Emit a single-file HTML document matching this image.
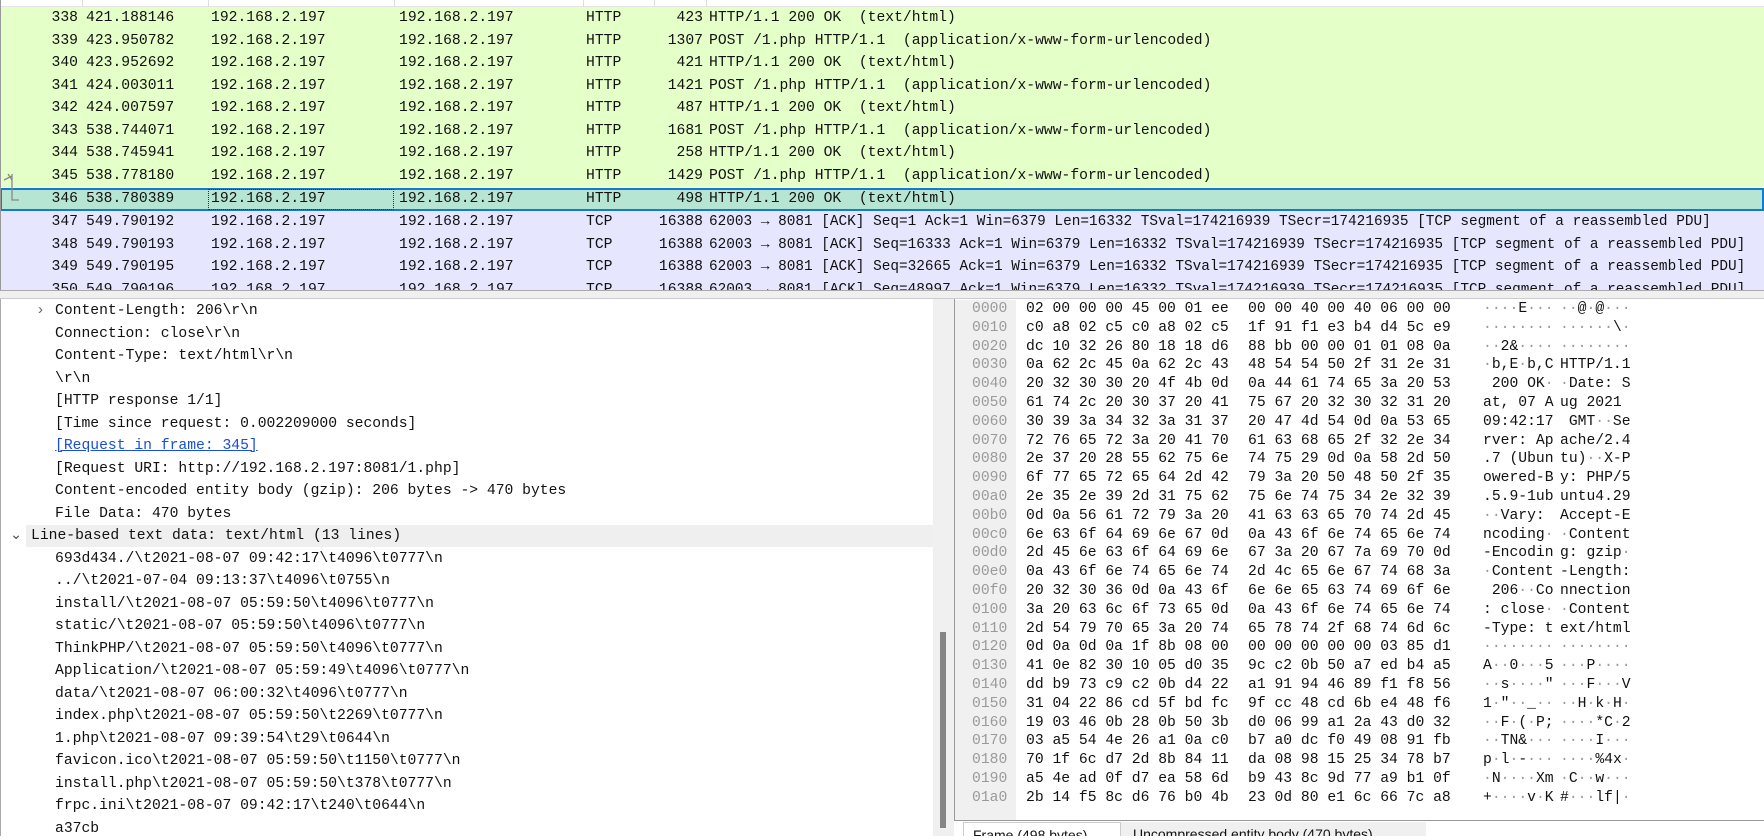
<!DOCTYPE html>
<html><head><meta charset="utf-8"><style>
*{margin:0;padding:0;box-sizing:border-box}
body{width:1764px;height:836px;overflow:hidden;background:#fff;font-family:"Liberation Mono",monospace;font-size:14.7px;color:#111;position:relative}
.a{position:absolute;white-space:pre}
.row{position:absolute;left:0;width:1764px;height:22.5px;line-height:22.5px}
.h{background:#e4ffc7}.t{background:#e7e6ff}
.r{text-align:right}
.t .i{font-size:14.4px}
.hx{position:absolute;white-space:pre;line-height:18.8px}
.off{color:#9a9a9a}
.dl{position:absolute;white-space:pre;line-height:22.5px}
</style></head><body>
<div class="a" style="left:0;top:0;width:1764px;height:7px;background:#fff;border-bottom:1px solid #e5e5e5"></div>
<div class="a" style="left:82px;top:0;width:1px;height:7px;background:#ddd"></div>
<div class="a" style="left:208px;top:0;width:1px;height:7px;background:#ddd"></div>
<div class="a" style="left:394px;top:0;width:1px;height:7px;background:#ddd"></div>
<div class="a" style="left:583px;top:0;width:1px;height:7px;background:#ddd"></div>
<div class="a" style="left:654px;top:0;width:1px;height:7px;background:#ddd"></div>
<div class="a" style="left:706px;top:0;width:1px;height:7px;background:#ddd"></div>

<div class="row h" style="top:7px"><span class="a r" style="left:40px;width:38px">338</span><span class="a" style="left:86px">421.188146</span><span class="a" style="left:211px">192.168.2.197</span><span class="a" style="left:399px">192.168.2.197</span><span class="a" style="left:586px">HTTP</span><span class="a r" style="left:640px;width:63px">423</span><span class="a" style="left:709px">HTTP/1.1 200 OK  (text/html)</span></div>
<div class="row h" style="top:29.5px"><span class="a r" style="left:40px;width:38px">339</span><span class="a" style="left:86px">423.950782</span><span class="a" style="left:211px">192.168.2.197</span><span class="a" style="left:399px">192.168.2.197</span><span class="a" style="left:586px">HTTP</span><span class="a r" style="left:640px;width:63px">1307</span><span class="a" style="left:709px">POST /1.php HTTP/1.1  (application/x-www-form-urlencoded)</span></div>
<div class="row h" style="top:52px"><span class="a r" style="left:40px;width:38px">340</span><span class="a" style="left:86px">423.952692</span><span class="a" style="left:211px">192.168.2.197</span><span class="a" style="left:399px">192.168.2.197</span><span class="a" style="left:586px">HTTP</span><span class="a r" style="left:640px;width:63px">421</span><span class="a" style="left:709px">HTTP/1.1 200 OK  (text/html)</span></div>
<div class="row h" style="top:74.5px"><span class="a r" style="left:40px;width:38px">341</span><span class="a" style="left:86px">424.003011</span><span class="a" style="left:211px">192.168.2.197</span><span class="a" style="left:399px">192.168.2.197</span><span class="a" style="left:586px">HTTP</span><span class="a r" style="left:640px;width:63px">1421</span><span class="a" style="left:709px">POST /1.php HTTP/1.1  (application/x-www-form-urlencoded)</span></div>
<div class="row h" style="top:97px"><span class="a r" style="left:40px;width:38px">342</span><span class="a" style="left:86px">424.007597</span><span class="a" style="left:211px">192.168.2.197</span><span class="a" style="left:399px">192.168.2.197</span><span class="a" style="left:586px">HTTP</span><span class="a r" style="left:640px;width:63px">487</span><span class="a" style="left:709px">HTTP/1.1 200 OK  (text/html)</span></div>
<div class="row h" style="top:119.5px"><span class="a r" style="left:40px;width:38px">343</span><span class="a" style="left:86px">538.744071</span><span class="a" style="left:211px">192.168.2.197</span><span class="a" style="left:399px">192.168.2.197</span><span class="a" style="left:586px">HTTP</span><span class="a r" style="left:640px;width:63px">1681</span><span class="a" style="left:709px">POST /1.php HTTP/1.1  (application/x-www-form-urlencoded)</span></div>
<div class="row h" style="top:142px"><span class="a r" style="left:40px;width:38px">344</span><span class="a" style="left:86px">538.745941</span><span class="a" style="left:211px">192.168.2.197</span><span class="a" style="left:399px">192.168.2.197</span><span class="a" style="left:586px">HTTP</span><span class="a r" style="left:640px;width:63px">258</span><span class="a" style="left:709px">HTTP/1.1 200 OK  (text/html)</span></div>
<div class="row h" style="top:164.5px"><span class="a r" style="left:40px;width:38px">345</span><span class="a" style="left:86px">538.778180</span><span class="a" style="left:211px">192.168.2.197</span><span class="a" style="left:399px">192.168.2.197</span><span class="a" style="left:586px">HTTP</span><span class="a r" style="left:640px;width:63px">1429</span><span class="a" style="left:709px">POST /1.php HTTP/1.1  (application/x-www-form-urlencoded)</span></div>
<div class="row" style="top:188px;height:23px;background:#b6e6d3;border:2px solid #1479d0;line-height:19px"><span class="a r" style="left:38px;width:38px">346</span><span class="a" style="left:84px">538.780389</span><span class="a" style="left:206px;top:-1px;width:186px;height:21px;border:1px dotted #333"></span><span class="a" style="left:209px">192.168.2.197</span><span class="a" style="left:397px">192.168.2.197</span><span class="a" style="left:584px">HTTP</span><span class="a r" style="left:638px;width:63px">498</span><span class="a" style="left:707px">HTTP/1.1 200 OK  (text/html)</span></div>
<div class="row t" style="top:211px"><span class="a r" style="left:40px;width:38px">347</span><span class="a" style="left:86px">549.790192</span><span class="a" style="left:211px">192.168.2.197</span><span class="a" style="left:399px">192.168.2.197</span><span class="a" style="left:586px">TCP</span><span class="a r" style="left:640px;width:63px">16388</span><span class="a i" style="left:709px">62003 → 8081 [ACK] Seq=1 Ack=1 Win=6379 Len=16332 TSval=174216939 TSecr=174216935 [TCP segment of a reassembled PDU]</span></div>
<div class="row t" style="top:233.5px"><span class="a r" style="left:40px;width:38px">348</span><span class="a" style="left:86px">549.790193</span><span class="a" style="left:211px">192.168.2.197</span><span class="a" style="left:399px">192.168.2.197</span><span class="a" style="left:586px">TCP</span><span class="a r" style="left:640px;width:63px">16388</span><span class="a i" style="left:709px">62003 → 8081 [ACK] Seq=16333 Ack=1 Win=6379 Len=16332 TSval=174216939 TSecr=174216935 [TCP segment of a reassembled PDU]</span></div>
<div class="row t" style="top:256px"><span class="a r" style="left:40px;width:38px">349</span><span class="a" style="left:86px">549.790195</span><span class="a" style="left:211px">192.168.2.197</span><span class="a" style="left:399px">192.168.2.197</span><span class="a" style="left:586px">TCP</span><span class="a r" style="left:640px;width:63px">16388</span><span class="a i" style="left:709px">62003 → 8081 [ACK] Seq=32665 Ack=1 Win=6379 Len=16332 TSval=174216939 TSecr=174216935 [TCP segment of a reassembled PDU]</span></div>
<div class="row t" style="top:278.5px;height:12px;overflow:hidden"><span class="a r" style="left:40px;width:38px">350</span><span class="a" style="left:86px">549.790196</span><span class="a" style="left:211px">192.168.2.197</span><span class="a" style="left:399px">192.168.2.197</span><span class="a" style="left:586px">TCP</span><span class="a r" style="left:640px;width:63px">16388</span><span class="a i" style="left:709px">62003 → 8081 [ACK] Seq=48997 Ack=1 Win=6379 Len=16332 TSval=174216939 TSecr=174216935 [TCP segment of a reassembled PDU]</span></div>
<svg class="a" style="left:0;top:170px" width="24" height="36"><path d="M4 10 L12 6 M12 4 L12 30 L19 30 M12 10 L8 4" stroke="#888" stroke-width="1.3" fill="none"/></svg>
<div class="a" style="left:0;top:0;width:1px;height:290px;background:#999"></div>
<div class="a" style="left:0;top:290px;width:1764px;height:9px;background:#f0f0f0;border-top:1px solid #aaa;border-bottom:1px solid #ccc"></div>

<div class="a" style="left:0;top:299px;width:934px;height:537px;border-left:1px solid #aaa"></div>
<div class="a" style="left:26px;top:525px;width:907px;height:22px;background:#efefef"></div>
<div class="dl" style="left:36px;top:300px;color:#666">›</div>
<div class="dl" style="left:55px;top:300px">Content-Length: 206\r\n</div>
<div class="dl" style="left:55px;top:322.5px">Connection: close\r\n</div>
<div class="dl" style="left:55px;top:345px">Content-Type: text/html\r\n</div>
<div class="dl" style="left:55px;top:367.5px">\r\n</div>
<div class="dl" style="left:55px;top:390px">[HTTP response 1/1]</div>
<div class="dl" style="left:55px;top:412.5px">[Time since request: 0.002209000 seconds]</div>
<div class="dl" style="left:55px;top:435px;color:#1a4fd6;text-decoration:underline">[Request in frame: 345]</div>
<div class="dl" style="left:55px;top:457.5px">[Request URI: http://192.168.2.197:8081/1.php]</div>
<div class="dl" style="left:55px;top:480px">Content-encoded entity body (gzip): 206 bytes -&gt; 470 bytes</div>
<div class="dl" style="left:55px;top:502.5px">File Data: 470 bytes</div>
<div class="dl" style="left:10px;top:525px;color:#555">⌄</div>
<div class="dl" style="left:31px;top:525px">Line-based text data: text/html (13 lines)</div>
<div class="dl" style="left:55px;top:547.5px">693d434./\t2021-08-07 09:42:17\t4096\t0777\n</div>
<div class="dl" style="left:55px;top:570px">../\t2021-07-04 09:13:37\t4096\t0755\n</div>
<div class="dl" style="left:55px;top:592.5px">install/\t2021-08-07 05:59:50\t4096\t0777\n</div>
<div class="dl" style="left:55px;top:615px">static/\t2021-08-07 05:59:50\t4096\t0777\n</div>
<div class="dl" style="left:55px;top:637.5px">ThinkPHP/\t2021-08-07 05:59:50\t4096\t0777\n</div>
<div class="dl" style="left:55px;top:660px">Application/\t2021-08-07 05:59:49\t4096\t0777\n</div>
<div class="dl" style="left:55px;top:682.5px">data/\t2021-08-07 06:00:32\t4096\t0777\n</div>
<div class="dl" style="left:55px;top:705px">index.php\t2021-08-07 05:59:50\t2269\t0777\n</div>
<div class="dl" style="left:55px;top:727.5px">1.php\t2021-08-07 09:39:54\t29\t0644\n</div>
<div class="dl" style="left:55px;top:750px">favicon.ico\t2021-08-07 05:59:50\t1150\t0777\n</div>
<div class="dl" style="left:55px;top:772.5px">install.php\t2021-08-07 05:59:50\t378\t0777\n</div>
<div class="dl" style="left:55px;top:795px">frpc.ini\t2021-08-07 09:42:17\t240\t0644\n</div>
<div class="dl" style="left:55px;top:817.5px">a37cb</div>
<div class="a" style="left:933px;top:299px;width:21px;height:537px;background:#f0f0f0"></div>
<div class="a" style="left:940px;top:632px;width:6px;height:196px;background:#858585"></div>

<div class="a" style="left:954px;top:299px;width:810px;height:522px;border-left:1px solid #999;border-bottom:1px solid #999"></div>
<div class="a" style="left:955px;top:300px;width:61px;height:520px;background:#f0f0f0"></div>
<div id="hex"></div>
<div class="a" style="left:963px;top:822px;width:158px;height:14px;background:#fff;border:1px solid #ccc;border-bottom:none;font-family:'Liberation Sans',sans-serif;font-size:14px;padding-left:9px;line-height:24px;overflow:hidden">Frame (498 bytes)</div>
<div class="a" style="left:1121px;top:822px;width:305px;height:14px;background:#f0f0f0;font-family:'Liberation Sans',sans-serif;font-size:14px;padding-left:12px;line-height:24px;overflow:hidden">Uncompressed entity body (470 bytes)</div>
<script>
const d=[
["0000","02 00 00 00 45 00 01 ee","00 00 40 00 40 06 00 00","····E···","··@·@···"],
["0010","c0 a8 02 c5 c0 a8 02 c5","1f 91 f1 e3 b4 d4 5c e9","········","······\\·"],
["0020","dc 10 32 26 80 18 18 d6","88 bb 00 00 01 01 08 0a","··2&····","········"],
["0030","0a 62 2c 45 0a 62 2c 43","48 54 54 50 2f 31 2e 31","·b,E·b,C","HTTP/1.1"],
["0040","20 32 30 30 20 4f 4b 0d","0a 44 61 74 65 3a 20 53"," 200 OK·","·Date: S"],
["0050","61 74 2c 20 30 37 20 41","75 67 20 32 30 32 31 20","at, 07 A","ug 2021 "],
["0060","30 39 3a 34 32 3a 31 37","20 47 4d 54 0d 0a 53 65","09:42:17"," GMT··Se"],
["0070","72 76 65 72 3a 20 41 70","61 63 68 65 2f 32 2e 34","rver: Ap","ache/2.4"],
["0080","2e 37 20 28 55 62 75 6e","74 75 29 0d 0a 58 2d 50",".7 (Ubun","tu)··X-P"],
["0090","6f 77 65 72 65 64 2d 42","79 3a 20 50 48 50 2f 35","owered-B","y: PHP/5"],
["00a0","2e 35 2e 39 2d 31 75 62","75 6e 74 75 34 2e 32 39",".5.9-1ub","untu4.29"],
["00b0","0d 0a 56 61 72 79 3a 20","41 63 63 65 70 74 2d 45","··Vary: ","Accept-E"],
["00c0","6e 63 6f 64 69 6e 67 0d","0a 43 6f 6e 74 65 6e 74","ncoding·","·Content"],
["00d0","2d 45 6e 63 6f 64 69 6e","67 3a 20 67 7a 69 70 0d","-Encodin","g: gzip·"],
["00e0","0a 43 6f 6e 74 65 6e 74","2d 4c 65 6e 67 74 68 3a","·Content","-Length:"],
["00f0","20 32 30 36 0d 0a 43 6f","6e 6e 65 63 74 69 6f 6e"," 206··Co","nnection"],
["0100","3a 20 63 6c 6f 73 65 0d","0a 43 6f 6e 74 65 6e 74",": close·","·Content"],
["0110","2d 54 79 70 65 3a 20 74","65 78 74 2f 68 74 6d 6c","-Type: t","ext/html"],
["0120","0d 0a 0d 0a 1f 8b 08 00","00 00 00 00 00 03 85 d1","········","········"],
["0130","41 0e 82 30 10 05 d0 35","9c c2 0b 50 a7 ed b4 a5","A··0···5","···P····"],
["0140","dd b9 73 c9 c2 0b d4 22","a1 91 94 46 89 f1 f8 56","··s····\"","···F···V"],
["0150","31 04 22 86 cd 5f bd fc","9f cc 48 cd 6b e4 48 f6","1·\"··_··","··H·k·H·"],
["0160","19 03 46 0b 28 0b 50 3b","d0 06 99 a1 2a 43 d0 32","··F·(·P;","····*C·2"],
["0170","03 a5 54 4e 26 a1 0a c0","b7 a0 dc f0 49 08 91 fb","··TN&···","····I···"],
["0180","70 1f 6c d7 2d 8b 84 11","da 08 98 15 25 34 78 b7","p·l·-···","····%4x·"],
["0190","a5 4e ad 0f d7 ea 58 6d","b9 43 8c 9d 77 a9 b1 0f","·N····Xm","·C··w···"],
["01a0","2b 14 f5 8c d6 76 b0 4b","23 0d 80 e1 6c 66 7c a8","+····v·K","#···lf|·"]];
let h="";
function esc(s){return s.replace(/&/g,"&amp;").replace(/</g,"&lt;").replace(/·/g,'<span style="color:#999">·</span>')}
d.forEach((r,i)=>{const y=300+i*18.8;
h+=`<div class="hx off" style="left:972px;top:${y}px">${r[0]}</div><div class="hx" style="left:1026px;top:${y}px">${r[1]}</div><div class="hx" style="left:1248px;top:${y}px">${r[2]}</div><div class="hx" style="left:1483px;top:${y}px">${esc(r[3])}</div><div class="hx" style="left:1560px;top:${y}px">${esc(r[4])}</div>`;});
document.getElementById("hex").innerHTML=h;
</script>
</body></html>
